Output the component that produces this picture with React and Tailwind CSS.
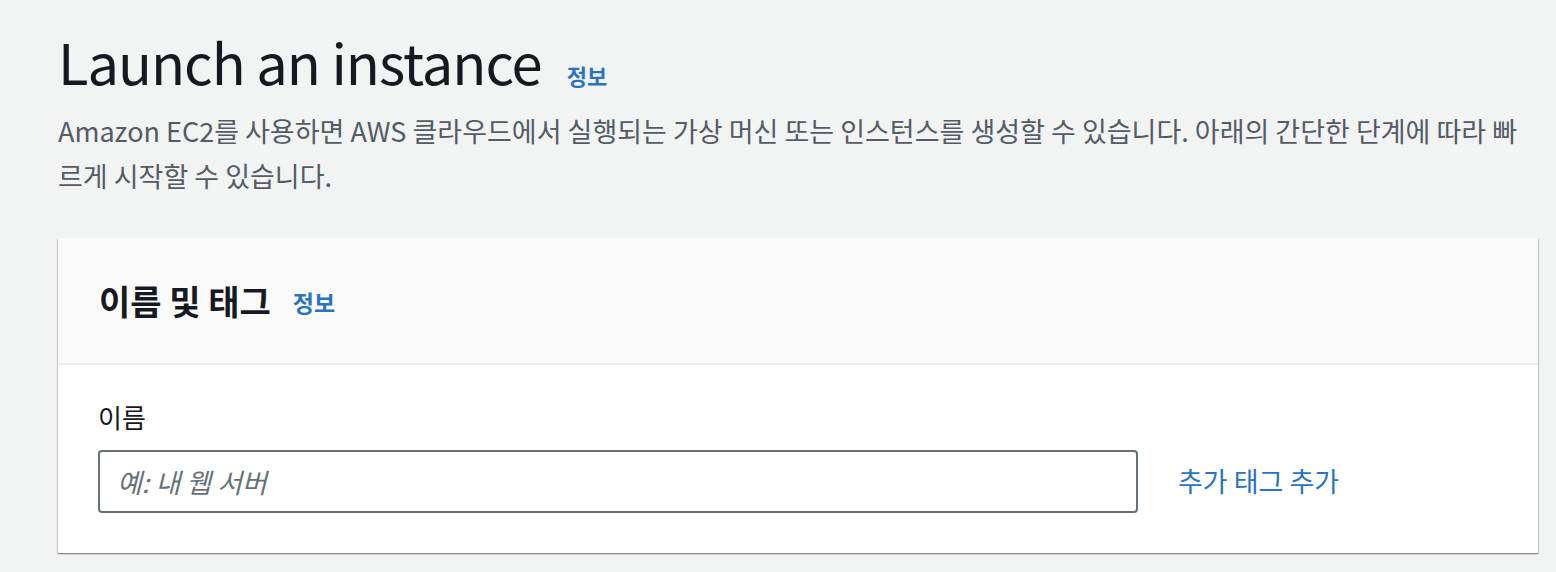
export default function App() {
  return (
    <div className="min-h-[572px] bg-[#f2f3f3] pl-[58px] pr-[18px] pt-[25px] font-['Noto_Sans_CJK_KR','Noto_Sans',sans-serif] text-[#16191f]">
      {/* Page header */}
      <div className="flex items-baseline gap-[25px]">
        <h1 className="text-[56px] leading-[72px] font-normal tracking-[-1px]">Launch an instance</h1>
        <a className="text-[22px] font-bold text-[#2a73bd]">정보</a>
      </div>
      <p className="mt-[11px] text-[27px] leading-[45px] text-[#545b64] pr-[20px]">
        Amazon EC2를 사용하면 AWS 클라우드에서 실행되는 가상 머신 또는 인스턴스를 생성할 수 있습니다. 아래의 간단한 단계에 따라 빠르게 시작할 수 있습니다.
      </p>

      {/* Name and tags card */}
      <div className="mt-[40px] bg-white shadow-[0_1px_1px_0_rgba(0,28,36,0.3),1px_1px_1px_0_rgba(0,28,36,0.15),-1px_1px_1px_0_rgba(0,28,36,0.15)]">
        <div className="h-[127px] bg-[#fafafa] border-b-2 border-[#eaeded] px-[41px] flex items-center gap-[22px]">
          <h2 className="text-[34px] font-bold">이름 및 태그</h2>
          <a className="text-[23px] font-bold text-[#2a73bd] pt-[4px]">정보</a>
        </div>
        <div className="px-[40px] pt-[35px] pb-[40px]">
          <label className="block text-[26px] leading-[34px]">이름</label>
          <div className="mt-[16px] flex items-center gap-[40px]">
            <input
              placeholder="예: 내 웹 서버"
              className="w-[1040px] h-[63px] rounded-[4px] border-2 border-[#687078] px-[17px] text-[27px] placeholder:italic placeholder:text-[#687078] outline-none"
            />
            <a className="text-[27px] text-[#2a73bd]">추가 태그 추가</a>
          </div>
        </div>
      </div>
    </div>
  );
}
